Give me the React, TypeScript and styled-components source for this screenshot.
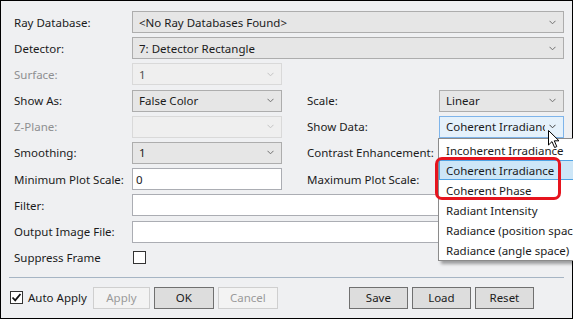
import React from "react";
import styled, { createGlobalStyle, css } from "styled-components";

const GlobalStyle = createGlobalStyle`
  html, body { margin: 0; padding: 0; overflow: hidden; background: #eff0f2; }
  * { box-sizing: border-box; }
`;

const FONT = `"Noto Sans", "Open Sans", sans-serif`;

const Window = styled.div`
  position: relative;
  width: 573px;
  height: 319px;
  border: 1px solid #000;
  background: #eff0f2;
  font-family: ${FONT};
  font-size: 11.5px;
  color: #1b1b1b;
  display: flex;
  flex-direction: column;
`;

const Form = styled.div`
  display: grid;
  grid-template-columns: 118px 150px 25px 132px 125px;
  grid-auto-rows: 22px;
  row-gap: 4.2px;
  padding: 10px 0 0 13px;
`;

const Label = styled.div<{ $disabled?: boolean; $col?: number }>`
  grid-column: ${(p) => p.$col ?? 1};
  display: flex;
  align-items: center;
  white-space: nowrap;
  color: ${(p) => (p.$disabled ? "#8e8f91" : "#1b1b1b")};
`;

const ChevronSvg = styled.svg`
  flex: none;
`;

const Chevron = ({ color }: { color: string }) => (
  <ChevronSvg width="7" height="5" viewBox="0 0 7 5">
    <polyline points="0.5,0.8 3.5,3.8 6.5,0.8" fill="none" stroke={color} strokeWidth="1" />
  </ChevronSvg>
);

const ComboBox = styled.div<{ $wide?: boolean; $col?: number; $disabled?: boolean; $focus?: boolean }>`
  grid-column: ${(p) => (p.$wide ? "2 / 6" : p.$col ?? 2)};
  display: flex;
  align-items: center;
  gap: 4px;
  padding: 0 7px 0 6px;
  border: 1px solid #adadad;
  background: #e6e6e6;
  white-space: nowrap;
  overflow: hidden;
  ${(p) =>
    p.$disabled &&
    css`
      border-color: #d9d9d9;
      background: #efefef;
      color: #4f4f4f;
    `}
  ${(p) =>
    p.$focus &&
    css`
      border-color: #7eb4ea;
      background: #e5f1fb;
    `}
`;

const ComboText = styled.span`
  overflow: hidden;
  flex: 1;
  min-width: 0;
`;

const TextBox = styled.div<{ $wide?: boolean }>`
  grid-column: ${(p) => (p.$wide ? "2 / 6" : 2)};
  border: 1px solid #abadb3;
  background: #fff;
  display: flex;
  align-items: center;
  padding: 0 3px;
`;

const CheckBox = styled.div`
  width: 13px;
  height: 13px;
  border: 1px solid #333;
  background: #fff;
  display: flex;
  align-items: center;
  justify-content: center;
  flex: none;
`;

const CheckCell = styled.div`
  grid-column: 2;
  display: flex;
  align-items: center;
  padding-left: 1px;
`;

const Separator = styled.div`
  height: 1px;
  background: #a6b5c4;
  margin: 8px 8px 0 8px;
`;

const BottomBar = styled.div`
  display: flex;
  align-items: center;
  padding: 9px 0 0 9px;
  gap: 4px;
`;

const AutoApply = styled.label`
  display: flex;
  align-items: center;
  gap: 5px;
  margin-right: 2px;
`;

const Button = styled.div<{ $disabled?: boolean; $w?: number }>`
  width: ${(p) => p.$w ?? 59}px;
  height: 22px;
  display: flex;
  align-items: center;
  justify-content: center;
  border: 1px solid #707070;
  background: #dddddd;
  ${(p) =>
    p.$disabled &&
    css`
      border-color: #cfcfcf;
      background: #f3f3f3;
      color: #9a9a9a;
    `}
`;

const Spacer = styled.div`
  width: 63px;
`;

const Popup = styled.div`
  position: absolute;
  left: 437px;
  top: 137px;
  width: 150px;
  padding-top: 1px;
  border: 1px solid #8b8b8b;
  background: #fff;
  box-shadow: 3px 3px 3px rgba(0, 0, 0, 0.35);
`;

const Item = styled.div<{ $selected?: boolean }>`
  height: 20px;
  display: flex;
  align-items: center;
  padding-left: 6px;
  white-space: nowrap;
  border: 1px solid transparent;
  ${(p) =>
    p.$selected &&
    css`
      background: #cde6f7;
      border-color: #4fa3e3;
    `}
`;

const Highlight = styled.div`
  position: absolute;
  left: 434px;
  top: 156px;
  width: 126px;
  height: 43px;
  border: 3px solid #e6141e;
  border-radius: 7px;
`;

const Cursor = styled.svg`
  position: absolute;
  left: 547px;
  top: 129px;
`;

export default function App() {
  return (
    <>
      <GlobalStyle />
      <Window>
        <Form>
          <Label>Ray Database:</Label>
          <ComboBox $wide>
            <ComboText>&lt;No Ray Databases Found&gt;</ComboText>
            <Chevron color="#707070" />
          </ComboBox>

          <Label>Detector:</Label>
          <ComboBox $wide>
            <ComboText>7: Detector Rectangle</ComboText>
            <Chevron color="#707070" />
          </ComboBox>

          <Label $disabled>Surface:</Label>
          <ComboBox $disabled>
            <ComboText>1</ComboText>
            <Chevron color="#c4c4c4" />
          </ComboBox>
          <div style={{ gridColumn: "3 / 6" }} />

          <Label>Show As:</Label>
          <ComboBox>
            <ComboText>False Color</ComboText>
            <Chevron color="#707070" />
          </ComboBox>
          <Label $col={4}>Scale:</Label>
          <ComboBox $col={5}>
            <ComboText>Linear</ComboText>
            <Chevron color="#707070" />
          </ComboBox>

          <Label $disabled>Z-Plane:</Label>
          <ComboBox $disabled>
            <ComboText></ComboText>
            <Chevron color="#c4c4c4" />
          </ComboBox>
          <Label $col={4}>Show Data:</Label>
          <ComboBox $col={5} $focus>
            <ComboText>Coherent Irradiance</ComboText>
            <Chevron color="#404040" />
          </ComboBox>

          <Label>Smoothing:</Label>
          <ComboBox>
            <ComboText>1</ComboText>
            <Chevron color="#707070" />
          </ComboBox>
          <Label $col={4}>Contrast Enhancement:</Label>
          <div />

          <Label>Minimum Plot Scale:</Label>
          <TextBox>0</TextBox>
          <Label $col={4}>Maximum Plot Scale:</Label>
          <div />

          <Label>Filter:</Label>
          <TextBox $wide />

          <Label>Output Image File:</Label>
          <TextBox $wide />

          <Label>Suppress Frame</Label>
          <CheckCell>
            <CheckBox />
          </CheckCell>
        </Form>

        <Separator />

        <BottomBar>
          <AutoApply>
            <CheckBox>
              <svg width="11" height="11" viewBox="0 0 11 11">
                <polyline points="1.5,5.5 4.2,8.3 9.5,2" fill="none" stroke="#111" strokeWidth="1.8" />
              </svg>
            </CheckBox>
            Auto Apply
          </AutoApply>
          <Button $disabled $w={57}>Apply</Button>
          <Button $w={60}>OK</Button>
          <Button $disabled $w={60}>Cancel</Button>
          <Spacer />
          <Button>Save</Button>
          <Button>Load</Button>
          <Button>Reset</Button>
        </BottomBar>

        <Popup>
          <Item>Incoherent Irradiance</Item>
          <Item $selected>Coherent Irradiance</Item>
          <Item>Coherent Phase</Item>
          <Item>Radiant Intensity</Item>
          <Item>Radiance (position space)</Item>
          <Item>Radiance (angle space)</Item>
        </Popup>
        <Highlight />
        <Cursor width="13" height="19" viewBox="0 0 13 19">
          <path d="M0.5,0.5 L0.5,15 L4,11.6 L6.6,17.5 L8.8,16.6 L6.3,10.8 L11,10.8 Z" fill="#fff" stroke="#000" strokeWidth="1" strokeLinejoin="round" />
        </Cursor>
      </Window>
    </>
  );
}
